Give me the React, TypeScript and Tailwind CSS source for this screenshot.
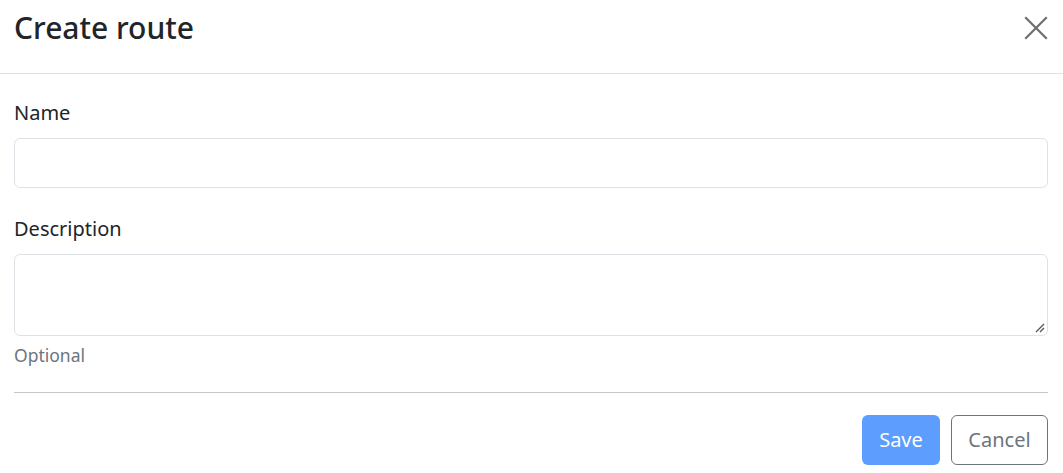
import { FC } from 'react';

const font = { fontFamily: '"Segoe UI", "Noto Sans", "Open Sans", sans-serif' };

const CloseIcon: FC = () => (
  <svg width="24" height="24" viewBox="0 0 24 24" fill="none">
    <path d="M2 2L22 22M22 2L2 22" stroke="#6f6f6f" strokeWidth="2.2" strokeLinecap="square" />
  </svg>
);

const ResizeGrip: FC = () => (
  <svg width="10" height="10" viewBox="0 0 10 10" className="absolute right-[3px] bottom-[3px]">
    <path d="M9 1L1 9M9 5L5 9" stroke="#555" strokeWidth="1.3" />
  </svg>
);

export default function App() {
  return (
    <div className="w-[1063px] h-[473px] bg-white text-[#212529] overflow-hidden" style={font}>
      <div className="h-[74px] border-b border-[#dee2e6] flex items-center justify-between pl-[14px] pr-[15px] pb-[18px]">
        <h2 className="text-[30px] font-medium leading-none">Create route</h2>
        <button type="button" className="w-[24px] h-[24px] flex items-center justify-center">
          <CloseIcon />
        </button>
      </div>

      <div className="px-[14px] pr-[15px] pt-[24px]">
        <label className="block text-[20px] leading-[30px] mb-[10px]">Name</label>
        <input
          type="text"
          className="block w-full h-[50px] border border-[#dee2e6] rounded-[6px] px-[15px] text-[20px] outline-none"
        />

        <label className="block text-[20px] leading-[30px] mt-[26px] mb-[10px]">Description</label>
        <div className="relative">
          <textarea className="block w-full h-[82px] border border-[#dee2e6] rounded-[6px] px-[15px] py-[8px] text-[20px] outline-none resize-none" />
          <ResizeGrip />
        </div>
        <div className="text-[17.5px] leading-[26px] text-[#6c757d] mt-[6px]">Optional</div>

        <div className="border-t border-[#c8c8c8] mt-[24px]" />

        <div className="flex justify-end gap-[11px] mt-[22px]">
          <button
            type="button"
            className="h-[50px] w-[78px] rounded-[6px] bg-[#5c9dfe] text-white text-[20px]"
          >
            Save
          </button>
          <button
            type="button"
            className="h-[50px] w-[97px] rounded-[6px] border border-[#6c757d] text-[#6c757d] text-[20px] bg-white"
          >
            Cancel
          </button>
        </div>
      </div>
    </div>
  );
}
